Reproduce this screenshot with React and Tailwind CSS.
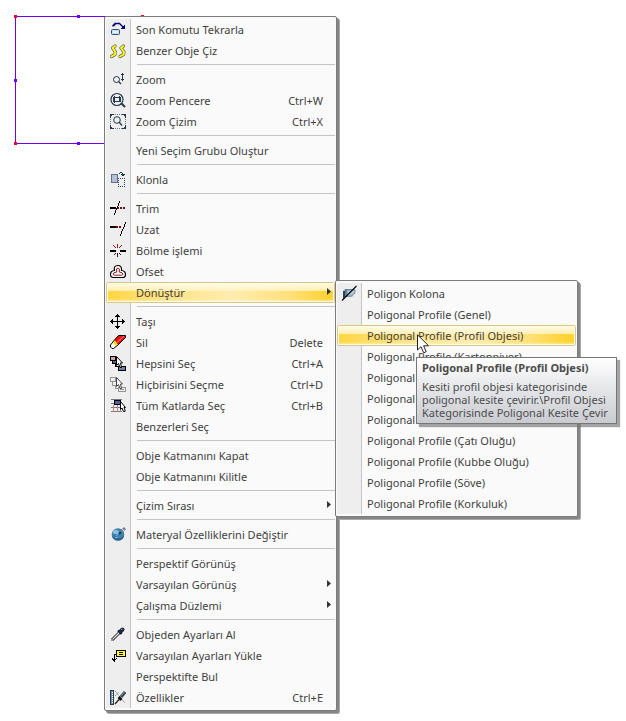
import clsx from "clsx";

const Icon = ({ children }) => (
  <svg
    width="16"
    height="21"
    viewBox="0 0 16 21"
    fill="none"
    shapeRendering="crispEdges"
    aria-hidden="true"
    className="shrink-0"
  >
    {children}
  </svg>
);

const RepeatIcon = () => (
  <Icon>
    <path d="M3 7.5V6.5H4V5.5H5V4.5H9.5L11.5 6.5L13.5 8.5" stroke="#00007a" shapeRendering="auto" strokeWidth="1.3" />
    <path d="M15 5V10H10L12 8Z" fill="#00007a" />
    <rect x="1.5" y="10.5" width="8" height="5" rx="1" fill="#c4dcee" stroke="#35506a" shapeRendering="auto" />
    <path d="M3 12H8V14H3Z" fill="#e4f2fb" />
  </Icon>
);

const SimilarIcon = () => (
  <Icon>
    <g shapeRendering="auto" strokeLinecap="round" strokeLinejoin="round">
      <path d="M5 6L2.5 8L5.5 12L5 14.5L1.5 16.5M13.5 6L11 8L14 12L13.5 14.5L10 16.5" stroke="#5b6470" strokeWidth="3.2" />
      <path d="M5 6L2.5 8L5.5 12L5 14.5L1.5 16.5M13.5 6L11 8L14 12L13.5 14.5L10 16.5" stroke="#ffff00" strokeWidth="2" />
    </g>
  </Icon>
);

const ZoomIcon = () => (
  <Icon>
    <circle cx="6.5" cy="10.5" r="3" stroke="#26384d" shapeRendering="auto" />
    <path d="M8.5 12.5L11 15" stroke="#26384d" strokeWidth="1.2" shapeRendering="auto" />
    <path d="M12 4H13V12H12ZM11 5H14V6H11ZM11 10H14V11H11Z" fill="#26384d" />
  </Icon>
);

const ZoomWindowIcon = () => (
  <Icon>
    <circle cx="7" cy="9.5" r="6" stroke="#26384d" strokeWidth="1.2" shapeRendering="auto" />
    <path d="M3.5 7.5H10.5V11.5H3.5ZM4.5 5.5V12.5M9.5 5.5V12" stroke="#26384d" />
    <path d="M11 13L15 17" stroke="#26384d" strokeWidth="2" shapeRendering="auto" />
  </Icon>
);

const ZoomExtentsIcon = () => (
  <Icon>
    <path d="M0 3H4V4H2V5H1V7H0ZM12 3H16V7H15V5H14V4H12ZM0 14H1V16H2V17H4V18H0ZM16 14V18H12V17H14V16H15V14Z" fill="#26384d" />
    <path d="M5 3.5H12M5 17.5H12M.5 8V14M15.5 8V14" stroke="#687788" strokeDasharray="1 1" />
    <circle cx="7" cy="9" r="3.3" stroke="#26384d" shapeRendering="auto" />
    <path d="M9 11L12 14.5" stroke="#26384d" strokeWidth="1.3" shapeRendering="auto" />
  </Icon>
);

const CloneIcon = () => (
  <Icon>
    <rect x="1.5" y="5.5" width="6" height="8" fill="#b3c0d6" stroke="#62728e" />
    <path d="M8 9.5H15M8 17.5H15M8.5 9V18M14.5 9V18" stroke="#35455e" strokeDasharray="1 1" />
    <path d="M9 5V4H10V3H12V4H13V5H15V6H14V7H12V6H11V5H12V4H10V5Z" fill="#113c46" />
  </Icon>
);

const TrimIcon = () => (
  <Icon>
    <path d="M0 9H6V11H0Z" fill="#000" />
    <path d="M7 10H15" stroke="#7b0d16" strokeWidth="2" strokeDasharray="2 1" />
    <path d="M9.5 3V5M8.5 5V8M7.5 8V10M6.5 10V12M5.5 12V15M4.5 15V17" stroke="#000" />
  </Icon>
);

const ExtendIcon = () => (
  <Icon>
    <path d="M0 7H6V9H0Z" fill="#000" />
    <path d="M6 8H12" stroke="#7b0d16" strokeWidth="2" strokeDasharray="2 1" />
    <path d="M15.5 3V5M14.5 5V8M13.5 8V10M12.5 10V12M11.5 12V15M10.5 15V17" stroke="#000" />
  </Icon>
);

const SplitIcon = () => (
  <Icon>
    <path d="M0 10H6V12H0ZM10 10H16V12H10Z" fill="#000" />
    <path d="M7 4H8V8H7ZM3 5H4V6H3ZM4 6H5V7H4ZM5 7H6V8H5ZM11 5H12V6H11ZM10 6H11V7H10ZM9 7H10V8H9Z" fill="#8b1820" />
    <path d="M7 13H8V17H7ZM5 13H6V14H5ZM4 14H5V15H4ZM9 13H10V14H9ZM10 14H11V15H10Z" fill="#2b1a1a" />
  </Icon>
);

const OffsetIcon = () => (
  <Icon>
    <g shapeRendering="auto">
      <path d="M4.5 9.5Q3.5 4.5 7.8 4.5Q12 4.5 11.5 9.5Q15.5 10 15.5 13.2Q15.5 16.5 12.5 16.5H3.5Q.5 16.5 .5 13.2Q.5 10 4.5 9.5Z" fill="#fff" stroke="#000" strokeWidth="1.2" />
      <path d="M6.8 11Q5.5 7 8 7Q10.3 7 9.2 11Q13 11.5 13 13Q13 14.2 11.5 14.2H4.5Q3 14.2 3 13Q3 11.5 6.8 11Z" stroke="#8b1820" />
    </g>
  </Icon>
);

const MoveIcon = () => (
  <Icon>
    <path
      d="M7 3H8V4H9V5H10V6H8V10H12V8H13V9H14V10H15V11H14V12H13V13H12V11H8V15H10V16H9V17H8V18H7V17H6V16H5V15H7V11H3V13H2V12H1V11H0V10H1V9H2V8H3V10H7V6H5V5H6V4H7Z"
      fill="#000"
    />
  </Icon>
);

const EraserIcon = () => (
  <Icon>
    <g shapeRendering="auto">
      <path d="M8.5 3.5H15.5V5.5L8 13L4.5 8Z" fill="#ee1111" />
      <path d="M7 10.5L14 4" stroke="#ff8a8a" />
      <path d="M4.5 8L2.5 10L6 14.5L8 13Z" fill="#ffe500" />
      <path d="M2.5 10L.5 13V15L2 16.5H3.5L6 14.5Z" fill="#fff" />
      <path d="M8.5 3.5H15.5V5.5L8 13L3.5 16.5H2L.5 15V13L4.5 8Z" stroke="#000" />
    </g>
  </Icon>
);

const Pointer = ({ x, y, fill = "#fff", stroke = "#000" }) => (
  <path
    transform={`translate(${x} ${y})`}
    d="M.5 .5V9.5L2.5 7.5L4 11.5H5.5L4.5 7H6.5Z"
    fill={fill}
    stroke={stroke}
    shapeRendering="auto"
  />
);

const SelectAllIcon = () => (
  <Icon>
    <rect x=".5" y="3.5" width="5" height="4" fill="#d3a4a4" stroke="#000" />
    <rect x="2.5" y="7.5" width="5" height="3" fill="#5a6690" stroke="#000" />
    <path d="M5.5 10V13.5H9" stroke="#000" strokeWidth="1" />
    <rect x="8.5" y="13.5" width="7" height="4" fill="#7080a8" stroke="#000" />
    <Pointer x={6} y={3} />
  </Icon>
);

const SelectNoneIcon = () => (
  <Icon>
    <g stroke="#959595">
      <rect x=".5" y="3.5" width="5" height="4" />
      <path d="M2.5 7.5V11.5H7.5M5.5 11.5V14.5H9" />
      <rect x="8.5" y="13.5" width="7" height="4" />
      <path d="M10 15.5H14" />
    </g>
    <Pointer x={6} y={3} stroke="#444" />
  </Icon>
);

const SelectStoreysIcon = () => (
  <Icon>
    <path d="M1 4.5H12M1 8.5H12M1 12.5H12M1 16.5H12" stroke="#777" />
    <path d="M3.5 10V17M7.5 10V17M10.5 10V17" stroke="#b98787" />
    <rect x="4.5" y="5.5" width="6" height="4" fill="#555a9c" stroke="#000" />
    <path d="M10.5 6.5V14.5L12 13L13.5 16.5H15V15L14 12.5H15.5Z" fill="#fff" stroke="#000" shapeRendering="auto" />
  </Icon>
);

const MaterialIcon = () => (
  <Icon>
    <g shapeRendering="auto">
      <circle cx="8" cy="10.5" r="6.3" fill="#3f7fae" />
      <path d="M2 12A6.3 6.3 0 0 0 14 12Q8 17 2 12Z" fill="#2c6088" />
      <ellipse cx="5.8" cy="8" rx="3" ry="2" fill="#8dc2e2" />
      <path d="M6 12L9 9M5 14L8 13" stroke="#76b4db" />
      <path d="M9 10L12 7" stroke="#203f5a" strokeWidth="2" />
      <path d="M11 8L15 4" stroke="#6d8398" strokeWidth="3" />
      <path d="M12 5L14 7" stroke="#d2dce3" />
    </g>
  </Icon>
);

const PickIcon = () => (
  <Icon>
    <g shapeRendering="auto">
      <path d="M2 16L9.5 8.5" stroke="#222" strokeWidth="3" />
      <path d="M2.8 15.2L9.5 8.5" stroke="#eee" strokeWidth="1.2" />
      <path d="M8 6.5L11.5 10" stroke="#000" strokeWidth="2" />
      <path d="M10.5 7.5L12.5 5.5" stroke="#1c2b40" strokeWidth="4" strokeLinecap="round" />
      <path d="M11 5.8L12.5 4.8" stroke="#7f96b5" />
    </g>
    <path d="M1 15H3V17H1Z" fill="#999" />
  </Icon>
);

const LoadDefaultsIcon = () => (
  <Icon>
    <rect x="6.5" y="5.5" width="9" height="6" fill="#ffff30" stroke="#000" />
    <path d="M9 7.5H13M9 9.5H13M6 9.5H4.5V16" stroke="#000" />
    <path d="M2 13H3V14H4V15H5V14H6V13H7V14H6V15H5V17H4V16H3V15H2Z" fill="#000" />
  </Icon>
);

const PropertiesIcon = () => (
  <Icon>
    <path d="M.5 3.5H3.5V17.5H.5Z" fill="#7490ae" stroke="#29384b" />
    <path d="M2 5.5H3M2 7.5H3M2 9.5H3M2 11.5H3M2 13.5H3M2 15.5H3" stroke="#fff" />
    <g shapeRendering="auto">
      <path d="M5 4L15 16M5 9L9 5" stroke="#888" strokeWidth="1" strokeDasharray="2 1" />
      <path d="M5 17L9 12.5" stroke="#333" strokeWidth="1.5" />
      <path d="M9 12.5L11 10.5" stroke="#111" strokeWidth="4" />
      <path d="M11 10L15 5" stroke="#35404f" strokeWidth="3" />
      <path d="M11.5 8.5L14.5 4.8" stroke="#8798ad" />
    </g>
  </Icon>
);

const PolygonIcon = () => (
  <Icon>
    <g shapeRendering="auto">
      <path d="M2 8L4 6H14L14 10L11 14H2Z" fill="#9bb4c6" />
      <path d="M2 8H4V14L2 16Z" fill="#27435a" />
      <path d="M4 6H11V13L4 14Z" fill="#587b95" />
      <path d="M6 7H14V10L10 13H6Z" fill="#b5cbd8" stroke="#7b96a9" />
      <path d="M1 17.5L15.5 3" stroke="#000" strokeWidth="1.1" />
    </g>
  </Icon>
);

const mainItems = [
  { label: "Son Komutu Tekrarla", icon: RepeatIcon },
  { label: "Benzer Obje Çiz", icon: SimilarIcon },
  null,
  { label: "Zoom", icon: ZoomIcon },
  { label: "Zoom Pencere", icon: ZoomWindowIcon, shortcut: "Ctrl+W" },
  { label: "Zoom Çizim", icon: ZoomExtentsIcon, shortcut: "Ctrl+X" },
  null,
  { label: "Yeni Seçim Grubu Oluştur" },
  null,
  { label: "Klonla", icon: CloneIcon },
  null,
  { label: "Trim", icon: TrimIcon },
  { label: "Uzat", icon: ExtendIcon },
  { label: "Bölme işlemi", icon: SplitIcon },
  { label: "Ofset", icon: OffsetIcon },
  { label: "Dönüştür", arrow: true, active: true, submenu: true },
  null,
  { label: "Taşı", icon: MoveIcon },
  { label: "Sil", icon: EraserIcon, shortcut: "Delete" },
  { label: "Hepsini Seç", icon: SelectAllIcon, shortcut: "Ctrl+A" },
  { label: "Hiçbirisini Seçme", icon: SelectNoneIcon, shortcut: "Ctrl+D" },
  { label: "Tüm Katlarda Seç", icon: SelectStoreysIcon, shortcut: "Ctrl+B" },
  { label: "Benzerleri Seç" },
  null,
  { label: "Obje Katmanını Kapat" },
  { label: "Obje Katmanını Kilitle" },
  null,
  { label: "Çizim Sırası", arrow: true },
  null,
  { label: "Materyal Özelliklerini Değiştir", icon: MaterialIcon },
  null,
  { label: "Perspektif Görünüş" },
  { label: "Varsayılan Görünüş", arrow: true },
  { label: "Çalışma Düzlemi", arrow: true },
  null,
  { label: "Objeden Ayarları Al", icon: PickIcon },
  { label: "Varsayılan Ayarları Yükle", icon: LoadDefaultsIcon },
  { label: "Perspektifte Bul" },
  { label: "Özellikler", icon: PropertiesIcon, shortcut: "Ctrl+E" },
];

const convertItems = [
  { label: "Poligon Kolona", icon: PolygonIcon },
  { label: "Poligonal Profile (Genel)" },
  { label: "Poligonal Profile (Profil Objesi)", active: true, tooltip: true },
  { label: "Poligonal Profile (Kartonpiyer)" },
  { label: "Poligonal" },
  { label: "Poligonal" },
  { label: "Poligonal" },
  { label: "Poligonal Profile (Çatı Oluğu)" },
  { label: "Poligonal Profile (Kubbe Oluğu)" },
  { label: "Poligonal Profile (Söve)" },
  { label: "Poligonal Profile (Korkuluk)" },
];

function MenuItem({ item }) {
  const ItemIcon = item.icon;

  return (
    <li className="relative">
      <button
        type="button"
        className={clsx(
          "relative flex h-[21px] w-full items-center pl-1 pr-3 text-left whitespace-nowrap",
          item.active &&
            "rounded-[2px] bg-[linear-gradient(to_bottom,#fffdf0_0%,#fff3c0cc_45%,transparent_45%,transparent_80%,#fff6c8_100%),linear-gradient(to_right,#ffd640,#ffe07a_20%,#ffedb0_55%,#ffe07a_80%,#ffd334_96%)] shadow-[inset_0_0_0_1px_#d9c88b,inset_0_0_0_2px_#fffbe6]"
        )}
      >
        <span className="w-[26px] shrink-0">{ItemIcon && <ItemIcon />}</span>
        <span className="grow">{item.label}</span>
        {item.shortcut && <span>{item.shortcut}</span>}
        {item.arrow && (
          <svg width="4" height="7" viewBox="0 0 4 7" className="absolute top-[6px] right-1" aria-hidden="true">
            <path d="M0 0L4 3.5L0 7Z" fill="#333" />
          </svg>
        )}
      </button>
      {item.submenu && (
        <div className="absolute -top-[2px] left-full z-10 w-[243px]">
          <Menu items={convertItems} />
        </div>
      )}
      {item.tooltip && <Tooltip />}
    </li>
  );
}

function Menu({ items }) {
  return (
    <ul className="rounded-[2px] border border-[#7c7c7c] bg-[#fafafa] bg-[linear-gradient(#eeeeee,#eeeeee),linear-gradient(#c5c5c5,#c5c5c5)] bg-[length:24px_calc(100%-4px),25px_calc(100%-4px)] bg-[position:1px_2px,1px_2px] bg-no-repeat px-px py-[2px] shadow-[2px_2px_0_#858585,3px_3px_0_#a9a9a9]">
      {items.map((item, i) =>
        item ? (
          <MenuItem key={i} item={item} />
        ) : (
          <li key={i} role="separator" className="h-2 pt-[3px] pl-[31px]">
            <div className="h-px bg-[#c5c5c5]" />
          </li>
        )
      )}
    </ul>
  );
}

function Tooltip() {
  return (
    <div
      role="tooltip"
      className="absolute top-8 left-[79px] z-20 w-[201px] border border-[#767676] bg-linear-to-b from-white to-[#c9cbd0] px-[5px] pt-[2px] pb-1 whitespace-nowrap text-[#4c4c4c] shadow-[3px_3px_1px_#777777aa]"
    >
      <p className="mb-1 leading-4 font-bold">Poligonal Profile (Profil Objesi)</p>
      <p className="leading-[13px]">
        Kesiti profil objesi kategorisinde
        <br />
        poligonal kesite çevirir.\Profil Objesi
        <br />
        Kategorisinde Poligonal Kesite Çevir
      </p>
      <svg width="13" height="20" viewBox="0 0 13 20" className="absolute -top-6 left-0" aria-hidden="true">
        <path d="M.5 .8V16L4 12.7L6.7 18.8L9.2 17.7L6.6 11.8H11.6Z" fill="#fff" stroke="#222" />
      </svg>
    </div>
  );
}

function Selection() {
  const corners = [[15, 16], [142, 16], [15, 143], [142, 143]];
  const middles = [[78, 16], [15, 80], [142, 80], [78, 143]];

  return (
    <svg width="160" height="160" shapeRendering="crispEdges" className="absolute top-0 left-0" aria-hidden="true">
      <rect x="15.5" y="16.5" width="127" height="127" fill="none" stroke="#6a00f0" />
      {corners.map(([x, y]) => (
        <rect key={`${x}-${y}`} x={x - 1} y={y - 1} width="3" height="3" fill="#f00010" />
      ))}
      {middles.map(([x, y]) => (
        <rect key={`${x}-${y}`} x={x - 1} y={y - 1} width="3" height="3" fill="#6a00f0" />
      ))}
    </svg>
  );
}

export default function App() {
  return (
    <main className="relative min-h-screen bg-white pt-4 pb-2 pl-[104px] font-['Noto_Sans',sans-serif] text-[11px] leading-4 text-[#3f3f3f]">
      <Selection />
      <div className="relative w-[233px]">
        <Menu items={mainItems} />
      </div>
    </main>
  );
}
